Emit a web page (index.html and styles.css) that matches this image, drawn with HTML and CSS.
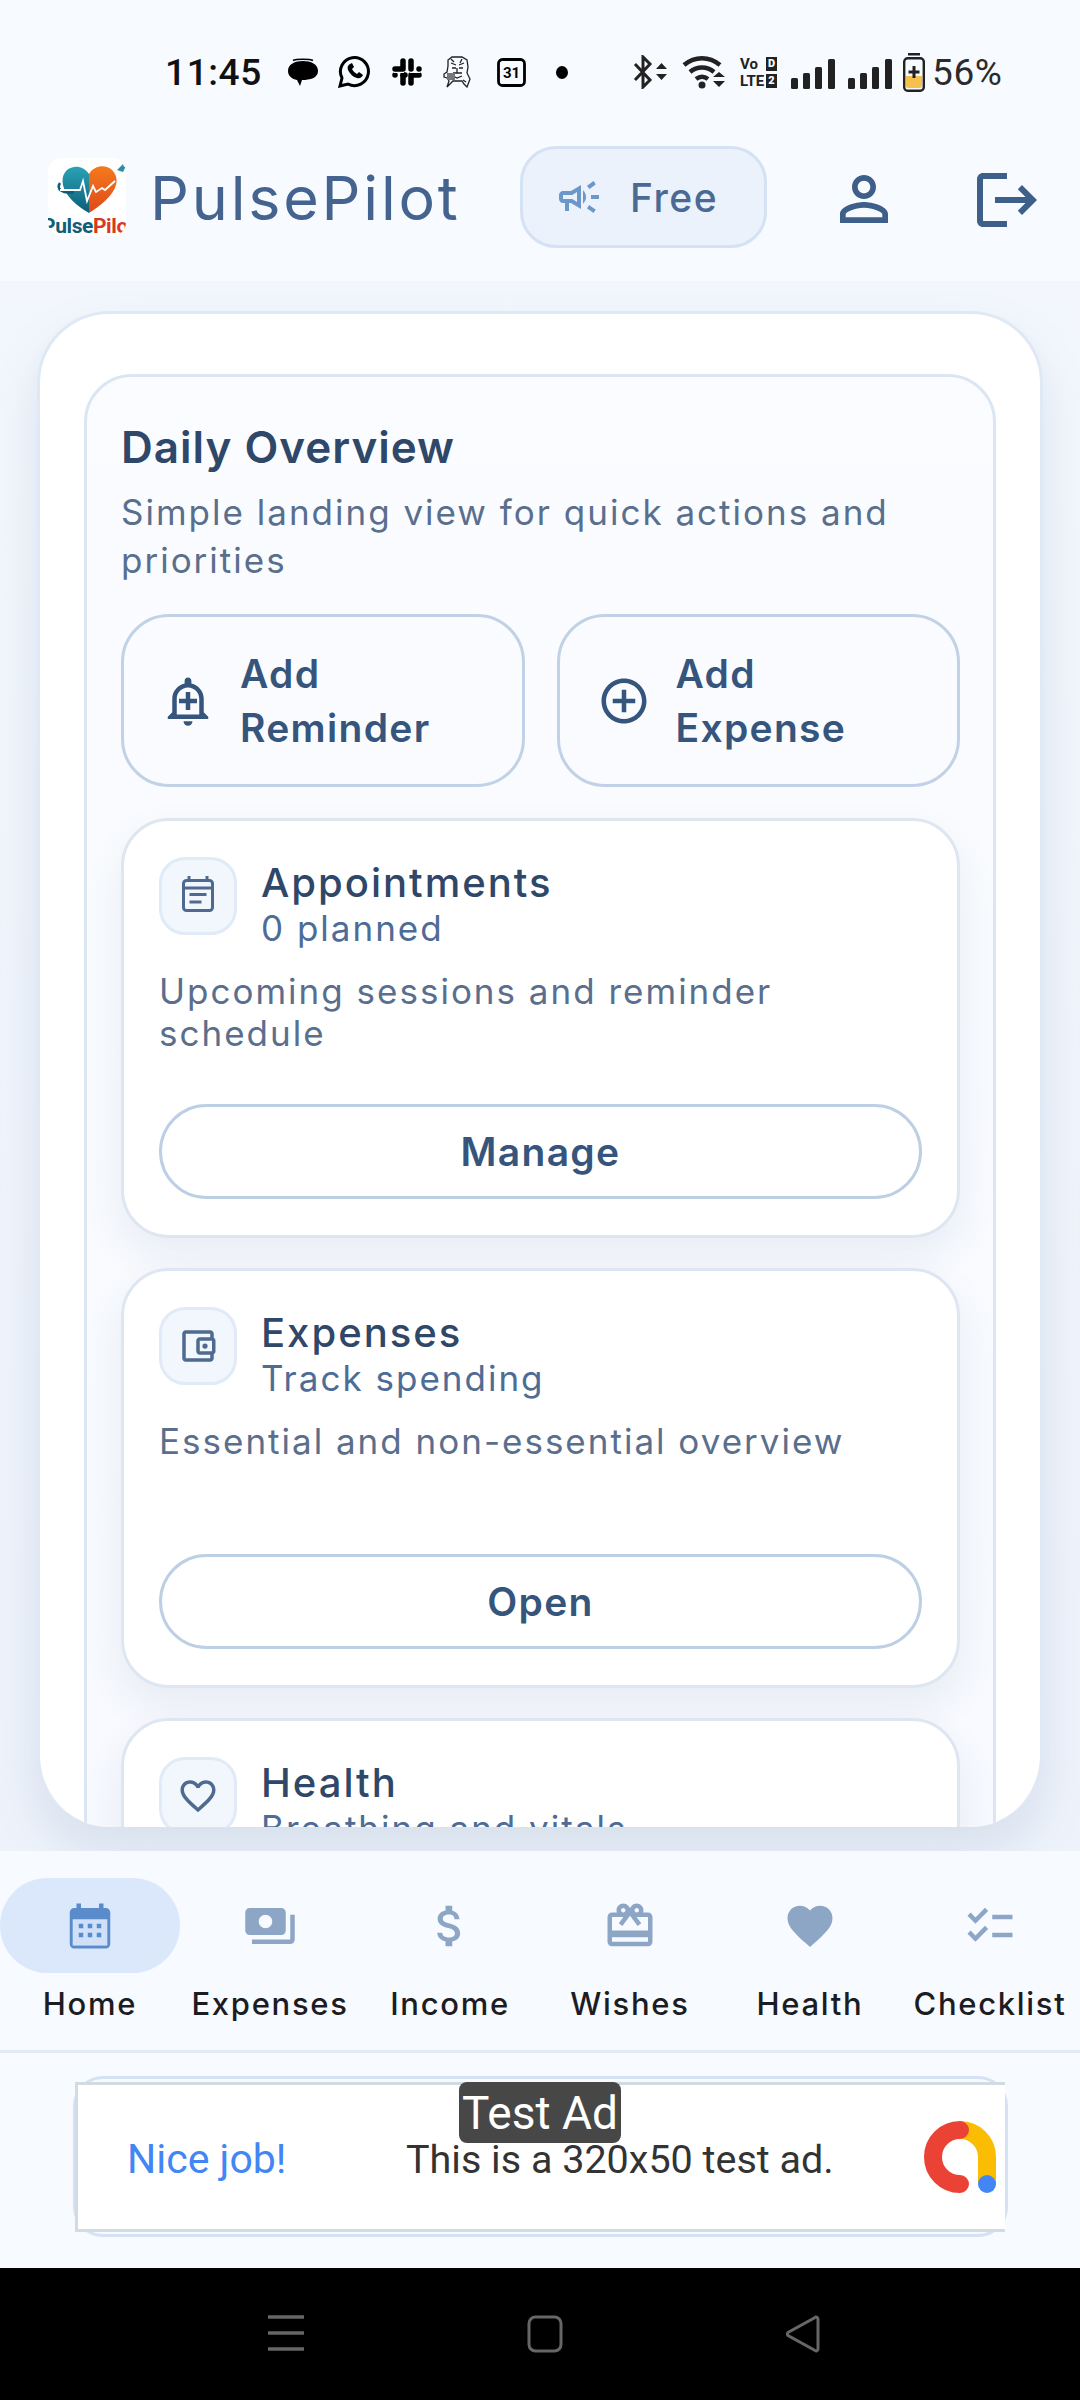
FILE: index.html
```html
<!DOCTYPE html>
<html lang="en">
<head>
<meta charset="utf-8">
<title>PulsePilot</title>
<link rel="stylesheet" href="styles.css">
</head>
<body>
<div class="app">
  <div class="status">
    <span class="time">11:45</span>
    <svg class="si s-bubble" viewBox="0 0 30 28"><path d="M15 3C7 3 0 6 0 13c0 5 4 8 9 9l3 6 2-6c8 0 16-2 16-9 0-7-7-10-15-10z"/><path d="M5 2.500C8 .8 22 .8 25 2.500" fill="none" stroke="#000" stroke-width="1.500"/></svg>
    <svg class="si s-wa" viewBox="0 0 34 32"><path d="M2 30l2-8a14 14 0 1 1 6 6z" fill="none" stroke="#000" stroke-width="3"/><path d="M12 8c-2 1-3 3-2 6 2 4 5 7 9 8 3 1 5-1 6-3l-4-3-2 2c-2-1-4-3-5-5l2-2-2-4z"/></svg>
    <svg class="si s-slack" viewBox="0 0 30 28"><g fill="none" stroke="#000" stroke-width="5.500" stroke-linecap="round"><path d="M11 3v8M3 11h8M19 25v-8M27 17h-8M19 3v8M27 11h0M11 25v-8M3 17h0"/><path d="M13 17h-2"/></g><path d="M2 14.500h10M18 14.500h10" stroke="#f7faff" stroke-width="1"/></svg>
    <svg class="si s-tiger" viewBox="0 0 29 32"><g fill="none" stroke="#222" stroke-width="1.300"><path d="M5 4l4-3h10l5 3 1 7-1 6 3 6-3 8-3-3-2-3H10l-3 3-3 3 2-6-2-3-3-1v-3l3-2 1-6z"/><path d="M8 7l5 2M21 7l-5 2M9 12h4M16 12h4M14 12v5M10 17h9M10 20l4 2 5-2M6 21h4M20 24l3 2M8 3l3 3M19 3l-2 4"/></g><rect x="4" y="17" width="8" height="7" fill="#777"/></svg>
    <svg class="si s-cal" viewBox="0 0 29 29"><rect x="1.500" y="1.500" width="26" height="26" rx="4" fill="none" stroke="#000" stroke-width="2.800"/><text x="14.500" y="20" text-anchor="middle" class="cal-num">31</text></svg>
    <span class="sdot"></span>
    <svg class="si s-bt" viewBox="0 0 34 34"><path d="M2 9l15 16-7 7V2l7 7L2 25" fill="none" stroke="#222" stroke-width="3"/><path d="M23 14h11l-5.500-6zM23 19h11l-5.500 6z" fill="#222"/></svg>
    <svg class="si s-wifi" viewBox="0 0 43 34"><g fill="none" stroke="#222" stroke-width="4.500"><path d="M2 10c11-9 25-9 36 0"/><path d="M8 17c7-6 17-6 24 0"/><path d="M14 24c4-3 8-3 12 0"/></g><circle cx="20" cy="30" r="3.500" fill="#222"/><path d="M31 22h12l-6-5zM31 26h12l-6 6z" fill="#222"/></svg>
    <div class="s-volte">
      <div class="v-row"><span>Vo</span><b>D</b></div>
      <div class="v-row"><span>LTE</span><b>2</b></div>
    </div>
    <svg class="si s-sig" viewBox="0 0 44 30"><g fill="#222"><rect x="0" y="19" width="7" height="11" rx="1.500"/><rect x="12" y="14" width="7" height="16" rx="1.500"/><rect x="24" y="8" width="7" height="22" rx="1.500"/><rect x="37" y="0" width="7" height="30" rx="1.500"/></g></svg>
    <svg class="si s-sig" viewBox="0 0 44 30"><g fill="#222"><rect x="0" y="19" width="7" height="11" rx="1.500"/><rect x="12" y="14" width="7" height="16" rx="1.500"/><rect x="24" y="8" width="7" height="22" rx="1.500"/><rect x="37" y="0" width="7" height="30" rx="1.500"/></g></svg>
    <svg class="si s-bat" viewBox="0 0 22 39"><rect x="5" y="0" width="12" height="2.500" fill="#222"/><path d="M3 23h16v10a2 2 0 0 1-2 2H5a2 2 0 0 1-2-2z" fill="#f6c04e"/><rect x="1.200" y="5.200" width="19.600" height="32.600" rx="3.500" fill="none" stroke="#222" stroke-width="2.400"/><path d="M11 13v12M5.500 19h11" stroke="#222" stroke-width="3"/></svg>
    <span class="pct">56%</span>
  </div>

  <header class="top">
    <svg class="logo" viewBox="0 0 78 78">
      <defs>
        <linearGradient id="lt" x1="0" y1="0" x2="0" y2="1"><stop offset="0" stop-color="#2aa3b5"/><stop offset="1" stop-color="#0d5c78"/></linearGradient>
        <linearGradient id="lo" x1="0" y1="0" x2="0" y2="1"><stop offset="0" stop-color="#f47a1c"/><stop offset="1" stop-color="#e0481a"/></linearGradient>
        <clipPath id="lc"><rect width="78" height="78" rx="14"/></clipPath>
      </defs>
      <g clip-path="url(#lc)">
        <rect width="78" height="78" fill="#fff"/>
        <path d="M41 16C37 10 31 8 26 9 18 10 13 17 15 27c2 11 14 21 26 28z" fill="url(#lt)"/>
        <path d="M41 16c4-7 12-9 18-7 8 3 11 11 9 18C65 38 52 48 41 55z" fill="url(#lo)"/>
        <path d="M12 25c-4 6 2 11 14 9" fill="none" stroke="#0d5c78" stroke-width="2.500"/>
        <path d="M12 32h20l3-9 4 20 6-15 3 6 6-4 3 2 10-9" fill="none" stroke="#fff" stroke-width="1.800"/>
        <path d="M69 12l6-6 1 3 2-1-3 6-3-1z" fill="#2b8ea3"/>
        <text x="-6" y="75" class="logo-txt"><tspan fill="#0f5f7a">Pulse</tspan><tspan fill="#d5391e">Pilot</tspan></text>
      </g>
    </svg>
    <div class="brand">PulsePilot</div>
    <div class="plan">
      <svg class="ic plan-ic" viewBox="0 0 24 24"><path d="M18 11v2h4v-2h-4zm-2 6.610c.96.71 2.210 1.650 3.200 2.390.4-.53.8-1.070 1.200-1.600-.99-.74-2.240-1.680-3.200-2.400-.4.54-.8 1.080-1.200 1.610zM20.400 5.600c-.4-.53-.8-1.070-1.200-1.600-.99.74-2.240 1.680-3.200 2.400.4.53.8 1.070 1.200 1.600.96-.72 2.210-1.650 3.200-2.400zM4 9c-1.100 0-2 .9-2 2v2c0 1.100.9 2 2 2h1v4h2v-4h1l5 3V6L8 9H4zm5.030 1.710L11 9.530v4.940l-1.970-1.180-.48-.29H4v-2h4.550l.48-.29zM15.500 12c0-1.330-.58-2.530-1.500-3.350v6.690c.92-.81 1.500-2.010 1.500-3.340z"/></svg>
      <span>Free</span>
    </div>
    <svg class="ic top-ic ti-user" viewBox="0 0 24 24"><path d="M12 5.900c1.160 0 2.100.94 2.100 2.100s-.94 2.100-2.100 2.100S9.900 9.160 9.900 8s.94-2.100 2.100-2.100m0 9c2.970 0 6.100 1.460 6.100 2.100v1.100H5.900V17c0-.64 3.130-2.100 6.100-2.100M12 4C9.790 4 8 5.790 8 8s1.790 4 4 4 4-1.790 4-4-1.790-4-4-4zm0 9c-2.670 0-8 1.340-8 4v3h16v-3c0-2.660-5.330-4-8-4z"/></svg>
    <svg class="ic top-ic ti-out" viewBox="0 0 24 24"><path d="M17 7l-1.410 1.410L18.170 11H8v2h10.170l-2.580 2.580L17 17l5-5zM4 5h8V3H4c-1.100 0-2 .9-2 2v14c0 1.100.9 2 2 2h8v-2H4V5z"/></svg>
  </header>

  <main class="stage">
    <section class="panel">
      <div class="overview">
        <h1 class="ov-title">Daily Overview</h1>
        <p class="ov-sub">Simple landing view for quick actions and priorities</p>
        <div class="quick">
          <button class="qbtn">
            <svg class="ic q-ic" viewBox="0 0 24 24"><path d="M10.010 21.010c0 1.100.89 1.990 1.990 1.990s1.990-.89 1.990-1.990h-3.980zM12 6c2.760 0 5 2.240 5 5v7H7v-7c0-2.760 2.240-5 5-5zm0-4.500c-.83 0-1.500.67-1.500 1.500v1.170C7.360 4.850 5 7.650 5 11v6l-2 2v1h18v-1l-2-2v-6c0-3.350-2.360-6.150-5.500-6.830V3c0-.83-.67-1.500-1.500-1.500zM13 8h-2v3H8v2h3v3h2v-3h3v-2h-3z"/></svg>
            <span>Add<br>Reminder</span>
          </button>
          <button class="qbtn">
            <svg class="ic q-ic" viewBox="0 0 24 24"><path d="M13 7h-2v4H7v2h4v4h2v-4h4v-2h-4V7zm-1-5C6.480 2 2 6.480 2 12s4.480 10 10 10 10-4.480 10-10S17.520 2 12 2zm0 18c-4.410 0-8-3.590-8-8s3.590-8 8-8 8 3.590 8 8-3.590 8-8 8z"/></svg>
            <span>Add<br>Expense</span>
          </button>
        </div>

        <article class="card">
          <div class="c-head">
            <div class="c-icon"><svg class="ic" viewBox="0 0 42 42"><g fill="none" stroke="currentColor" stroke-width="3"><rect x="6.500" y="5.500" width="29" height="30" rx="3"/><path d="M6.500 13h29M12 1v4M30 1v4"/><path d="M12.500 19.500h17M12.500 27h12"/></g></svg></div>
            <div><h2 class="c-title">Appointments</h2><div class="c-meta">0 planned</div></div>
          </div>
          <p class="c-desc">Upcoming sessions and reminder schedule</p>
          <button class="c-btn">Manage</button>
        </article>

        <article class="card">
          <div class="c-head">
            <div class="c-icon"><svg class="ic" viewBox="0 0 24 24"><path d="M21 7.280V5c0-1.100-.9-2-2-2H5c-1.110 0-2 .9-2 2v14c0 1.100.89 2 2 2h14c1.100 0 2-.9 2-2v-2.280c.59-.35 1-.98 1-1.720V9c0-.74-.41-1.380-1-1.720zM20 9v6h-7V9h7zM5 19V5h14v2h-6c-1.100 0-2 .9-2 2v6c0 1.100.9 2 2 2h6v2H5z"/><circle cx="16" cy="12" r="1.500"/></svg></div>
            <div><h2 class="c-title">Expenses</h2><div class="c-meta">Track spending</div></div>
          </div>
          <p class="c-desc">Essential and non-essential overview</p>
          <button class="c-btn">Open</button>
        </article>

        <article class="card">
          <div class="c-head">
            <div class="c-icon"><svg class="ic" viewBox="0 0 24 24"><path d="M16.500 3c-1.740 0-3.410.81-4.500 2.090C10.910 3.810 9.240 3 7.500 3 4.420 3 2 5.420 2 8.500c0 3.780 3.400 6.860 8.550 11.540L12 21.350l1.450-1.320C18.600 15.360 22 12.280 22 8.500 22 5.420 19.580 3 16.500 3zm-4.400 15.550l-.1.1-.1-.1C7.140 14.240 4 11.390 4 8.500 4 6.500 5.500 5 7.500 5c1.540 0 3.040.99 3.570 2.360h1.870C13.460 5.990 14.960 5 16.500 5c2 0 3.500 1.500 3.500 3.500 0 2.890-3.140 5.740-7.900 10.050z"/></svg></div>
            <div><h2 class="c-title">Health</h2><div class="c-meta">Breathing and vitals</div></div>
          </div>
        </article>
      </div>
    </section>
  </main>

  <nav class="nav">
    <div class="nav-item active">
      <div class="nav-pill"><svg class="nav-ic" viewBox="0 0 24 24"><path d="M19 4h-1V2h-2v2H8V2H6v2H5c-1.100 0-2 .9-2 2v14c0 1.100.9 2 2 2h14c1.100 0 2-.9 2-2V6c0-1.100-.9-2-2-2z"/><rect x="4.300" y="9" width="15.400" height="11.700" fill="#cfe0f8"/><g><rect x="7" y="11" width="2" height="2"/><rect x="11" y="11" width="2" height="2"/><rect x="15" y="11" width="2" height="2"/><rect x="7" y="15" width="2" height="2"/><rect x="11" y="15" width="2" height="2"/><rect x="15" y="15" width="2" height="2"/></g></svg></div>
      <span class="nav-lab">Home</span>
    </div>
    <div class="nav-item">
      <div class="nav-pill"><svg class="nav-ic" viewBox="0 0 24 24"><path d="M19 14V6c0-1.100-.9-2-2-2H3c-1.100 0-2 .9-2 2v8c0 1.100.9 2 2 2h14c1.100 0 2-.9 2-2zm-9-1c-1.660 0-3-1.340-3-3s1.340-3 3-3 3 1.340 3 3-1.340 3-3 3zm13-6v11c0 1.100-.9 2-2 2H4v-2h17V7h2z"/></svg></div>
      <span class="nav-lab">Expenses</span>
    </div>
    <div class="nav-item">
      <div class="nav-pill"><svg class="nav-ic" viewBox="0 0 24 24"><path d="M11.800 10.900c-2.270-.59-3-1.200-3-2.150 0-1.090 1.010-1.850 2.700-1.850 1.780 0 2.440.85 2.500 2.100h2.210c-.07-1.720-1.120-3.300-3.210-3.810V3h-3v2.160c-1.940.42-3.500 1.680-3.500 3.610 0 2.310 1.910 3.460 4.700 4.130 2.500.6 3 1.480 3 2.410 0 .69-.49 1.790-2.700 1.790-2.060 0-2.870-.92-2.980-2.100h-2.200c.12 2.190 1.760 3.420 3.680 3.830V21h3v-2.150c1.950-.37 3.500-1.500 3.500-3.550 0-2.840-2.430-3.810-4.700-4.400z"/></svg></div>
      <span class="nav-lab">Income</span>
    </div>
    <div class="nav-item">
      <div class="nav-pill"><svg class="nav-ic" viewBox="0 0 24 24"><path d="M20 6h-2.180c.11-.31.18-.65.18-1 0-1.660-1.340-3-3-3-1.050 0-1.960.54-2.500 1.350l-.5.67-.5-.68C10.960 2.540 10.050 2 9 2 7.340 2 6 3.340 6 5c0 .35.07.69.18 1H4c-1.110 0-1.990.89-1.990 2L2 19c0 1.110.89 2 2 2h16c1.110 0 2-.89 2-2V8c0-1.110-.89-2-2-2zm-5-2c.55 0 1 .45 1 1s-.45 1-1 1-1-.45-1-1 .45-1 1-1zM9 4c.55 0 1 .45 1 1s-.45 1-1 1-1-.45-1-1 .45-1 1-1zm11 15H4v-2h16v2zm0-5H4V8h5.080L7 10.830 8.620 12 11 8.760l1-1.360 1 1.360L15.380 12 17 10.830 14.920 8H20v6z"/></svg></div>
      <span class="nav-lab">Wishes</span>
    </div>
    <div class="nav-item">
      <div class="nav-pill"><svg class="nav-ic" viewBox="0 0 24 24"><path d="M12 21.350l-1.450-1.320C5.400 15.360 2 12.280 2 8.500 2 5.420 4.420 3 7.500 3c1.740 0 3.410.81 4.500 2.090C13.090 3.810 14.760 3 16.500 3 19.580 3 22 5.420 22 8.500c0 3.780-3.400 6.860-8.550 11.540L12 21.350z"/></svg></div>
      <span class="nav-lab">Health</span>
    </div>
    <div class="nav-item">
      <div class="nav-pill"><svg class="nav-ic" viewBox="0 0 24 24"><path d="M22 7h-9v2h9V7zm0 8h-9v2h9v-2zM5.540 11 2 7.460l1.410-1.410 2.120 2.120 4.240-4.240 1.410 1.410L5.540 11zm0 8L2 15.460l1.410-1.410 2.120 2.120 4.240-4.240 1.410 1.410L5.540 19z"/></svg></div>
      <span class="nav-lab">Checklist</span>
    </div>
  </nav>

  <section class="adzone">
    <div class="ad-back">
      <div class="ad">
        <span class="ad-tag">Test Ad</span>
        <span class="ad-nice">Nice job!</span>
        <span class="ad-text">This is a 320x50 test ad.</span>
        <svg class="ad-logo" viewBox="0 0 72 72">
          <path d="M36 9A27 27 0 0 1 63 36V63" fill="none" stroke="#fbbc04" stroke-width="18"/>
          <path d="M36 9A27 27 0 0 0 36 63" fill="none" stroke="#ea4335" stroke-width="18" stroke-linecap="round"/>
          <circle cx="63" cy="63" r="9" fill="#4285f4"/>
        </svg>
      </div>
    </div>
  </section>

  <footer class="sysnav">
    <svg class="sys sys-menu" viewBox="0 0 36 36"><path d="M0 2h36M0 18h36M0 34h36" stroke="#666" stroke-width="3.500"/></svg>
    <svg class="sys sys-home" viewBox="0 0 36 38"><rect x="2" y="2" width="32" height="34" rx="6.500" fill="none" stroke="#666" stroke-width="3"/></svg>
    <svg class="sys sys-back" viewBox="0 0 36 38"><path d="M33 4v30a2 2 0 0 1-3.400 1.300L3 20.500a2 2 0 0 1 0-3L29.600 2.700A2 2 0 0 1 33 4z" fill="none" stroke="#666" stroke-width="3"/></svg>
  </footer>
</div>
</body>
</html>
```

FILE: styles.css
```css
* { box-sizing: border-box; }
html, body { margin: 0; padding: 0; }
body { width: 1080px; height: 2400px; overflow: hidden; background: #f7faff; font-family: "Inter", "Noto Sans", sans-serif; }
.app { width: 1080px; height: 2400px; display: flex; flex-direction: column; overflow: hidden; }
h1, h2, p { margin: 0; font: inherit; }
button { font: inherit; background: none; cursor: pointer; }
.ic { display: block; fill: currentColor; }

/* status bar */
.status { flex: none; height: 100px; padding: 44px 0 0 165px; display: flex; align-items: center; color: #111; }
.time { font: 500 37px/1 "Roboto", sans-serif; width: 97px; margin-right: 26px; letter-spacing: .6px; white-space: nowrap; }
.si { display: block; flex: none; }
.s-bubble { width: 30px; height: 28px; margin-right: 20px; }
.s-wa { width: 34px; height: 32px; margin-right: 20px; }
.s-slack { width: 30px; height: 28px; margin-right: 21px; }
.s-tiger { width: 29px; height: 32px; margin-right: 25px; }
.s-cal { width: 29px; height: 29px; margin-right: 30px; }
.cal-num { font: 700 15px "Roboto", sans-serif; fill: #000; }
.sdot { width: 12px; height: 13px; border-radius: 50%; background: #000; margin-right: 65px; flex: none; }
.s-bt { width: 34px; height: 34px; margin-right: 15px; }
.s-wifi { width: 43px; height: 34px; margin-right: 15px; }
.s-volte { width: 37px; margin-right: 14px; display: flex; flex-direction: column; gap: 3px; }
.v-row { display: flex; justify-content: space-between; align-items: center; font: 700 15px/14px "Roboto", sans-serif; color: #222; }
.v-row b { background: #222; color: #f7faff; width: 11px; height: 14px; font-size: 11px; line-height: 14px; text-align: center; }
.s-sig { width: 44px; height: 30px; margin-right: 13px; margin-top: 4px; }
.s-sig + .s-sig { margin-right: 11px; }
.s-bat { width: 22px; height: 39px; margin-right: 7px; }
.pct { font: 400 37px/1 "Roboto", sans-serif; color: #2b2b2b; letter-spacing: .6px; }

/* header */
.top { flex: none; height: 181px; padding: 0 0 0 48px; display: flex; align-items: center; }
.logo { display: block; width: 78px; height: 78px; flex: none; margin-right: 24px; margin-top: 12px; }
.logo-txt { font: 700 21px "Roboto", sans-serif; letter-spacing: -.4px; }
.brand { width: 370px; font-size: 61px; font-weight: 400; letter-spacing: 2.800px; color: #44648f; margin-top: 14px; white-space: nowrap; }
.plan { width: 247px; height: 102px; border: 3px solid #d4e2f4; border-radius: 36px; background: #ebf2fc; display: flex; align-items: center; padding-left: 32px; gap: 27px; color: #4a6a96; font-size: 39px; font-weight: 500; letter-spacing: 1.500px; margin-top: 13px; flex: none; }
.plan-ic { width: 48px; height: 48px; color: #6b97c9; }
.top-ic { width: 72px; height: 72px; color: #3f5f8b; margin-top: 16px; flex: none; }
.ti-user { margin-left: 61px; }
.ti-out { margin-left: 71px; margin-top: 18px; }

/* stage */
.stage { flex: none; height: 1570px; padding: 30px 37px 24px 37px; background: linear-gradient(180deg, #f3f7fd 0, #eef3fb 100%); }
.panel { height: 1516px; border: 3px solid #dfe8f5; border-bottom: 0; border-radius: 72px; background: #fff; padding: 60px 44px 0; overflow: hidden; box-shadow: 0 24px 50px rgba(60, 90, 140, .13); }
.overview { border: 3px solid #dce6f3; border-radius: 48px; background: linear-gradient(180deg, #fafcff 0, #f6f9fe 100%); padding: 43px 33px 40px 34px; }
.ov-title { font-size: 44px; line-height: 54px; font-weight: 600; color: #2f4768; letter-spacing: 1px; }
.ov-sub { margin-top: 14px; font-size: 35px; line-height: 48px; color: #5a6f8d; letter-spacing: 2px; }
.quick { margin-top: 30px; display: grid; grid-template-columns: 1fr 1fr; gap: 32px; }
.qbtn { height: 173px; border: 3px solid #c1d2e6; border-radius: 48px; display: flex; align-items: center; gap: 25px; padding: 0 0 0 37px; text-align: left; color: #36557d; font-size: 39px; line-height: 54px; font-weight: 600; letter-spacing: 1.300px; }
.q-ic { width: 54px; height: 54px; flex: none; }

.card { margin-top: 31px; height: 420px; padding: 36px 35px; border: 3px solid #dee6f1; border-radius: 48px; background: #fff; box-shadow: 0 18px 40px rgba(50, 80, 120, .08); }
.card + .card { margin-top: 30px; }
.c-head { display: flex; gap: 24px; }
.c-icon { width: 78px; height: 78px; flex: none; border: 3px solid #e1eaf7; border-radius: 26px; background: #f2f6fd; display: flex; align-items: center; justify-content: center; color: #4f6a90; }
.c-icon .ic { width: 42px; height: 42px; }
.c-title { margin-top: 3px; font-size: 40px; line-height: 46px; font-weight: 500; color: #2f4768; letter-spacing: 2px; }
.c-meta { margin-top: 1px; font-size: 35px; line-height: 42px; color: #4d6c96; letter-spacing: 2px; }
.c-desc { margin-top: 21px; min-height: 84px; font-size: 35px; line-height: 42px; color: #5a6f8d; letter-spacing: 2px; }
.c-btn { display: block; width: 100%; height: 95px; margin-top: 50px; border: 3px solid #bccfe4; border-radius: 48px; color: #36557d; font-size: 39px; font-weight: 600; letter-spacing: 1.300px; }

/* bottom nav */
.nav { flex: none; height: 202px; border-bottom: 3px solid #e0e9f6; background: #f7faff; display: grid; grid-template-columns: repeat(6, 180px); padding-top: 27px; }
.nav-item { display: flex; flex-direction: column; align-items: center; }
.nav-pill { width: 180px; height: 95px; border-radius: 48px; display: flex; align-items: center; justify-content: center; }
.active .nav-pill { background: #dbe8fc; }
.nav-ic { display: block; width: 54px; height: 54px; fill: #8ea6c5; }
.active .nav-ic { fill: #5a8ccb; }
.nav-lab { margin-top: 11px; font-size: 31px; font-weight: 500; line-height: 40px; color: #1c1c22; letter-spacing: 1.700px; white-space: nowrap; }

/* ad */
.adzone { flex: none; height: 215px; padding-top: 23px; background: #f7faff; }
.ad-back { width: 935px; height: 161px; margin-left: 73px; border: 3px solid #d4e2f4; border-radius: 30px; padding-top: 3px; }
.ad { position: relative; width: 930px; height: 150px; margin-left: -1px; background: #fff; border: 3px solid #d2dae2; border-right: 0; display: flex; align-items: center; font-family: "Roboto", sans-serif; }
.ad-tag { position: absolute; left: 381px; top: -3px; width: 162px; height: 61px; border-radius: 8px; background: #474747; color: #fff; font-size: 46px; line-height: 62px; text-align: center; }
.ad-nice { margin: 4px 0 0 49px; width: 279px; font-size: 41px; font-weight: 400; color: #4285f4; }
.ad-text { margin-top: 4px; font-size: 39.500px; color: #333; }
.ad-logo { position: absolute; left: 846px; top: 36px; width: 72px; height: 72px; }

/* system nav */
.sysnav { flex: none; height: 132px; background: #000; position: relative; display: flex; padding: 47px 0 0 268px; align-items: flex-start; }
.sys { display: block; width: 36px; height: 36px; flex: none; }
.sys-home { height: 38px; margin-left: 223px; }
.sys-back { height: 38px; margin-left: 222px; }
```
